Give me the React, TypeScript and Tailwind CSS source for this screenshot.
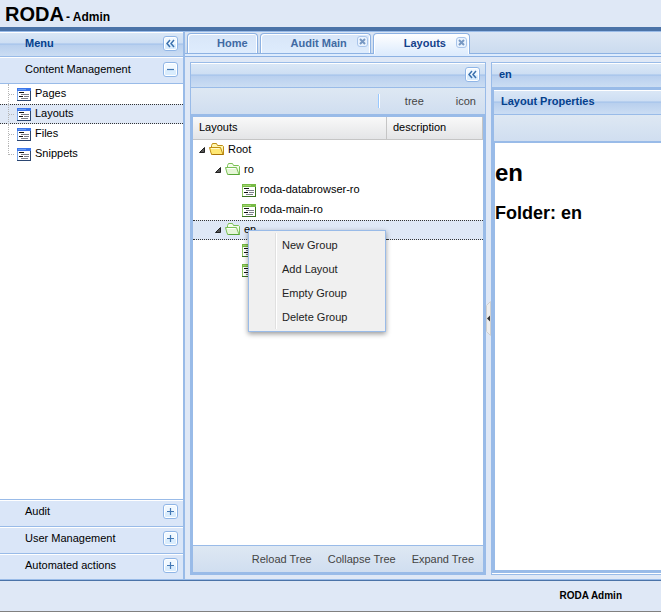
import React from 'react';

const titleBar =
  'flex h-6 shrink-0 items-center border-t border-white bg-[linear-gradient(#dae7f6,#cddef3_45%,#abc7ec_46%,#abc7ec_50%,#b8cfee_51%,#cbddf3)] pb-0.5 font-bold text-[#04408c]';
const toolBar = 'flex h-[26px] shrink-0 items-center bg-linear-to-b from-[#dee8f3] to-[#d0def0] text-[#444444]';

type Glyph = 'collapse' | 'minus' | 'plus';

function ToolButton({ glyph, label }: { glyph: Glyph; label: string }) {
  return (
    <button type="button" aria-label={label} className="block h-[15px] w-[15px] shrink-0">
      <svg width="15" height="15" viewBox="0 0 15 15">
        <rect x="0.5" y="0.5" width="14" height="14" rx="2.5" fill="#ffffff" stroke="#8fb5e6" />
        <rect x="2" y="2" width="11" height="11" rx="1" fill="#f0f8ff" />
        <rect x="2" y="8" width="11" height="5" rx="1" fill="#d9ecfd" />
        {glyph === 'collapse' && (
          <path d="M7 4L4 7.5L7 11M11 4L8 7.5L11 11" fill="none" stroke="#3a70ad" strokeWidth="1.5" />
        )}
        {glyph === 'minus' && <path d="M4 7.5H11" stroke="#4479b5" strokeWidth="1.2" />}
        {glyph === 'plus' && <path d="M4 7.5H11M7.5 4V11" stroke="#4479b5" strokeWidth="1.2" />}
      </svg>
    </button>
  );
}

function PageIcon({ green = false }: { green?: boolean }) {
  return (
    <svg width="14" height="13" viewBox="0 0 14 13" shapeRendering="crispEdges" className="shrink-0" aria-hidden="true">
      <rect width="14" height="13" fill={green ? '#8cc75f' : '#7ba6e8'} />
      <rect x="1" y="3" width="12" height="9" fill="#ffffff" />
      <rect width="14" height="3" fill={green ? '#78bb47' : '#3b76ea'} />
      <rect x="1" y="1" width="8" height="1" fill={green ? '#a0d36d' : '#6d9ff5'} />
      <path d="M13 3h1v10H0v-1h13z" fill={green ? '#39701f' : '#2b4672'} />
      <path d="M2 4h5v1H2zM2 8h4v1H2z" fill="#111111" />
      <path d="M4 6h8v1H4zM7 8h5v1H7zM4 10h7v1H4z" fill="#7c8088" />
    </svg>
  );
}

function FolderIcon({ green = false }: { green?: boolean }) {
  const line = green ? '#7cc158' : '#c08e14';
  const fill = green ? '#e6f6d8' : '#ffe873';
  return (
    <svg width="16" height="14" viewBox="0 0 16 14" className="shrink-0" aria-hidden="true">
      <path
        d="M2.5 12.5V3.5L3.5 1.5H7.5L8.5 3.5H13.5L14.5 4.5V12.5z"
        fill={green ? '#f4fcec' : '#fff7ae'}
        stroke={line}
      />
      <path d="M.5 5.5H11.5L14 12.5H3.5Q2.5 12.5 2 11z" fill={fill} stroke={line} />
      <path d="M2 6.5H10.5" stroke={green ? '#ffffff' : '#fffbd0'} />
      <path d="M3.5 12.5H14.5" stroke={green ? '#57a637' : '#a87206'} />
    </svg>
  );
}

function Expander() {
  return (
    <svg width="6" height="6" viewBox="0 0 6 6" className="mt-px shrink-0" aria-hidden="true">
      <path d="M5.5 .5V5.5H.5z" fill="#555555" stroke="#222222" />
    </svg>
  );
}

function MenuSection({ label, open = false }: { label: string; open?: boolean }) {
  return (
    <div className="border-t border-[#99bbe8]">
      <div
        className={
          'flex h-[26px] items-center justify-between border-t border-white bg-[#dae6f8] pr-[5px] pl-[25px] ' +
          (open ? 'pb-0.5' : 'pb-1')
        }
      >
        <h3 className="pb-0.5">{label}</h3>
        <ToolButton glyph={open ? 'minus' : 'plus'} label={(open ? 'Collapse ' : 'Expand ') + label} />
      </div>
    </div>
  );
}

function Sidebar() {
  const items = ['Pages', 'Layouts', 'Files', 'Snippets'];
  return (
    <nav className="flex w-[185px] shrink-0 flex-col border-r-2 border-[#99bbe8] bg-white">
      <div className={titleBar + ' justify-between pr-[5px] pl-[25px]'}>
        <h2 className="pb-0.5">Menu</h2>
        <ToolButton glyph="collapse" label="Collapse menu" />
      </div>
      <MenuSection label="Content Management" open />
      <ul className="flex-1 border-t border-[#99bbe8]">
        {items.map((item, i) => (
          <li
            key={item}
            className={
              'flex h-5 border-y border-dotted pl-2 ' +
              (item === 'Layouts' ? 'border-[#333333] bg-[#dfe8f6]' : 'border-transparent')
            }
          >
            <span
              className={
                'border-l border-dotted border-[#b5b5b5] ' + (i === items.length - 1 ? 'h-2.5' : '-my-px h-5')
              }
            />
            <span className="mt-[9px] mr-[3px] h-px w-[5px] border-t border-dotted border-[#b5b5b5]" />
            <span className="flex items-center gap-1 pb-0.5">
              <span className="mt-[3px]">
                <PageIcon />
              </span>
              <a href="#" className="leading-4">
                {item}
              </a>
            </span>
          </li>
        ))}
      </ul>
      <MenuSection label="Audit" />
      <MenuSection label="User Management" />
      <MenuSection label="Automated actions" />
    </nav>
  );
}

function Tab({ label, active = false, closable = false }: { label: string; active?: boolean; closable?: boolean }) {
  return (
    <div
      className={
        'relative flex items-center rounded-t border border-b-0 border-[#8db2e3] font-bold shadow-[inset_1px_1px_0_#ffffff,inset_-1px_0_0_#ffffff] ' +
        (closable ? 'pl-[30px] ' : 'pl-[29px] ') +
        (active
          ? 'z-10 h-[21px] bg-linear-to-b from-white to-[#deecfd] text-[#15428b]'
          : 'h-5 bg-linear-to-b from-[#d8e6f8] to-[#deecfd] text-[#416aa3]')
      }
    >
      <button
        type="button"
        role="tab"
        aria-selected={active}
        className={'pb-0.5 ' + (closable ? 'pr-2.5' : 'pr-[9px]')}
      >
        {label}
      </button>
      {closable && (
        <button type="button" aria-label={'Close ' + label} className="mr-0.5 mb-1 block">
          <svg width="11" height="11" viewBox="0 0 11 11">
            <rect x="0.5" y="0.5" width="10" height="10" rx="2.5" fill="#eaf3fe" stroke="#a9c5eb" />
            <path d="M3 3L8 8M8 3L3 8" stroke="#7898c3" strokeWidth="2" />
          </svg>
        </button>
      )}
    </div>
  );
}

function ContextMenu() {
  return (
    <div
      role="menu"
      className="absolute top-[90px] left-[55px] z-20 w-[138px] border border-[#99bbe8] bg-[#f0f0f0] p-0.5 text-[#222222] shadow-[0_2px_5px_rgba(0,0,0,0.4)]"
    >
      <div className="ml-6 border-l border-[#e0e0e0]">
        <div className="border-l border-white pl-[5px]">
          {['New Group', 'Add Layout', 'Empty Group', 'Delete Group'].map((item) => (
            <button key={item} type="button" role="menuitem" className="block h-6 w-full text-left">
              {item}
            </button>
          ))}
        </div>
      </div>
    </div>
  );
}

type Node = { label: string; kind: 'root' | 'folder' | 'page'; selected?: boolean };

const nodes: Node[] = [
  { label: 'Root', kind: 'root' },
  { label: 'ro', kind: 'folder' },
  { label: 'roda-databrowser-ro', kind: 'page' },
  { label: 'roda-main-ro', kind: 'page' },
  { label: 'en', kind: 'folder', selected: true },
  { label: '', kind: 'page' },
  { label: '', kind: 'page' },
];

const indents = { root: 'pl-1.5', folder: 'pl-[22px]', page: 'pl-[49px]' };

function TreeTable() {
  return (
    <table className="w-full table-fixed border-separate border-spacing-0 text-left">
      <thead>
        <tr className="h-[23px] bg-linear-to-b from-[#f9f9f9] to-[#e3e4e6]">
          <th className="w-[194px] border-r border-b border-[#c5c5c5] p-0 pb-0.5 pl-1.5 font-normal">Layouts</th>
          <th className="border-r border-b border-[#c5c5c5] p-0 pb-0.5 pl-1.5 font-normal">description</th>
        </tr>
      </thead>
      <tbody>
        {nodes.map((node, i) => {
          const cell =
            'h-5 border-y border-dotted p-0 ' +
            (node.selected ? 'border-[#333333] bg-[#dfe8f6]' : 'border-transparent');
          return (
            <tr key={i}>
              <td className={cell}>
                <div className={'flex h-[18px] items-center pb-0.5 ' + indents[node.kind]}>
                  {node.kind === 'page' ? (
                    <span className="mt-[3px]">
                      <PageIcon green />
                    </span>
                  ) : (
                    <>
                      <Expander />
                      <span className="ml-1">
                        <FolderIcon green={node.kind === 'folder'} />
                      </span>
                    </>
                  )}
                  <span className={node.kind === 'page' ? 'ml-1' : 'ml-[3px]'}>{node.label}</span>
                </div>
              </td>
              <td className={cell} />
            </tr>
          );
        })}
      </tbody>
    </table>
  );
}

function TreePanel() {
  return (
    <section className="flex w-[296px] shrink-0 flex-col border border-[#99bbe8]">
      <div className={titleBar + ' justify-end pr-[5px]'}>
        <ToolButton glyph="collapse" label="Collapse layouts" />
      </div>
      <div className={toolBar + ' box-content justify-end border-t border-[#99bbe8] pr-[9px]'}>
        <span className="mr-[25px] h-3.5 w-0.5 border-r border-l border-r-white border-l-[#98c8ff]" />
        <button type="button" className="mr-8">
          tree
        </button>
        <button type="button">icon</button>
      </div>
      <div className="flex min-h-0 flex-1 flex-col border-x-2 border-t-[3px] border-b-2 border-[#99bbe8] bg-white">
        <div className="relative flex-1">
          <TreeTable />
          <div className="absolute inset-x-0 top-[23px]">
            <ContextMenu />
          </div>
        </div>
        <div className={toolBar + ' box-content justify-end gap-4 border-t border-[#99bbe8] pr-[9px]'}>
          <button type="button">Reload Tree</button>
          <button type="button">Collapse Tree</button>
          <button type="button">Expand Tree</button>
        </div>
      </div>
    </section>
  );
}

function DetailPanel() {
  return (
    <section className="flex min-w-0 flex-1 flex-col border-y border-l border-[#99bbe8] bg-white">
      <div className={titleBar + ' pl-[7px]'}>
        <h2 className="pb-0.5">en</h2>
      </div>
      <div className="mb-px flex flex-1 flex-col border-t-[3px] border-b-[3px] border-l-2 border-[#99bbe8]">
        <div className={titleBar + ' pl-[7px]'}>
          <h2 className="pb-0.5">Layout Properties</h2>
        </div>
        <div className={toolBar + ' box-content border-t border-b-2 border-[#99bbe8]'} />
        <div className="flex-1 border-l border-[#99bbe8] bg-white text-black">
          <h1 className="mt-4 text-2xl leading-7 font-bold">en</h1>
          <p className="mt-4 text-lg leading-5 font-bold">Folder: en</p>
        </div>
      </div>
    </section>
  );
}

export default function App() {
  return (
    <div className="flex h-screen min-h-[400px] flex-col overflow-hidden bg-[#dfe8f6] font-['Liberation_Sans',Arial,sans-serif] text-[11px] leading-[14px] text-black">
      <header className="box-content flex h-[27px] shrink-0 items-baseline border-b-4 border-[#4b73a8] pl-[5px] font-bold">
        <h1 className="flex items-baseline gap-0.5 text-xl leading-7">
          RODA <small className="text-xs">- Admin</small>
        </h1>
      </header>
      <div className="flex min-h-0 flex-1 border-t border-[#99bbe8]">
        <Sidebar />
        <main className="flex min-w-0 flex-1 flex-col">
          <div
            role="tablist"
            className="flex h-[22px] shrink-0 items-start gap-0.5 border-b border-[#8db2e3] bg-linear-to-b from-[#dbe6f4] to-[#cbdbef] pt-px pl-0.5"
          >
            <Tab label="Home" />
            <Tab label="Audit Main" closable />
            <Tab label="Layouts" active closable />
          </div>
          <div className="h-[3px] shrink-0 border-b border-[#8db2e3] bg-[#deecfd]" />
          <div className="flex min-h-0 flex-1 pt-[5px] pb-[5px] pl-[5px]">
            <TreePanel />
            <div className="flex w-[5px] shrink-0 items-center">
              <button type="button" aria-label="Collapse panel" className="block">
                <svg width="5" height="35" viewBox="0 0 5 35">
                  <path d="M4.5 .5L.5 4.5V30.5L4.5 34.5z" fill="#eeeeee" stroke="#d0d0d0" />
                  <path d="M4 14.5V20.5L1 17.5z" fill="#333333" />
                </svg>
              </button>
            </div>
            <DetailPanel />
          </div>
        </main>
      </div>
      <footer className="flex h-8 shrink-0 items-center justify-end border-t border-b border-t-[#4b73a8] border-b-[#808080] pr-[39px] text-[10px] font-bold shadow-[0_-1px_0_#99bbe8]">
        RODA Admin
      </footer>
    </div>
  );
}
